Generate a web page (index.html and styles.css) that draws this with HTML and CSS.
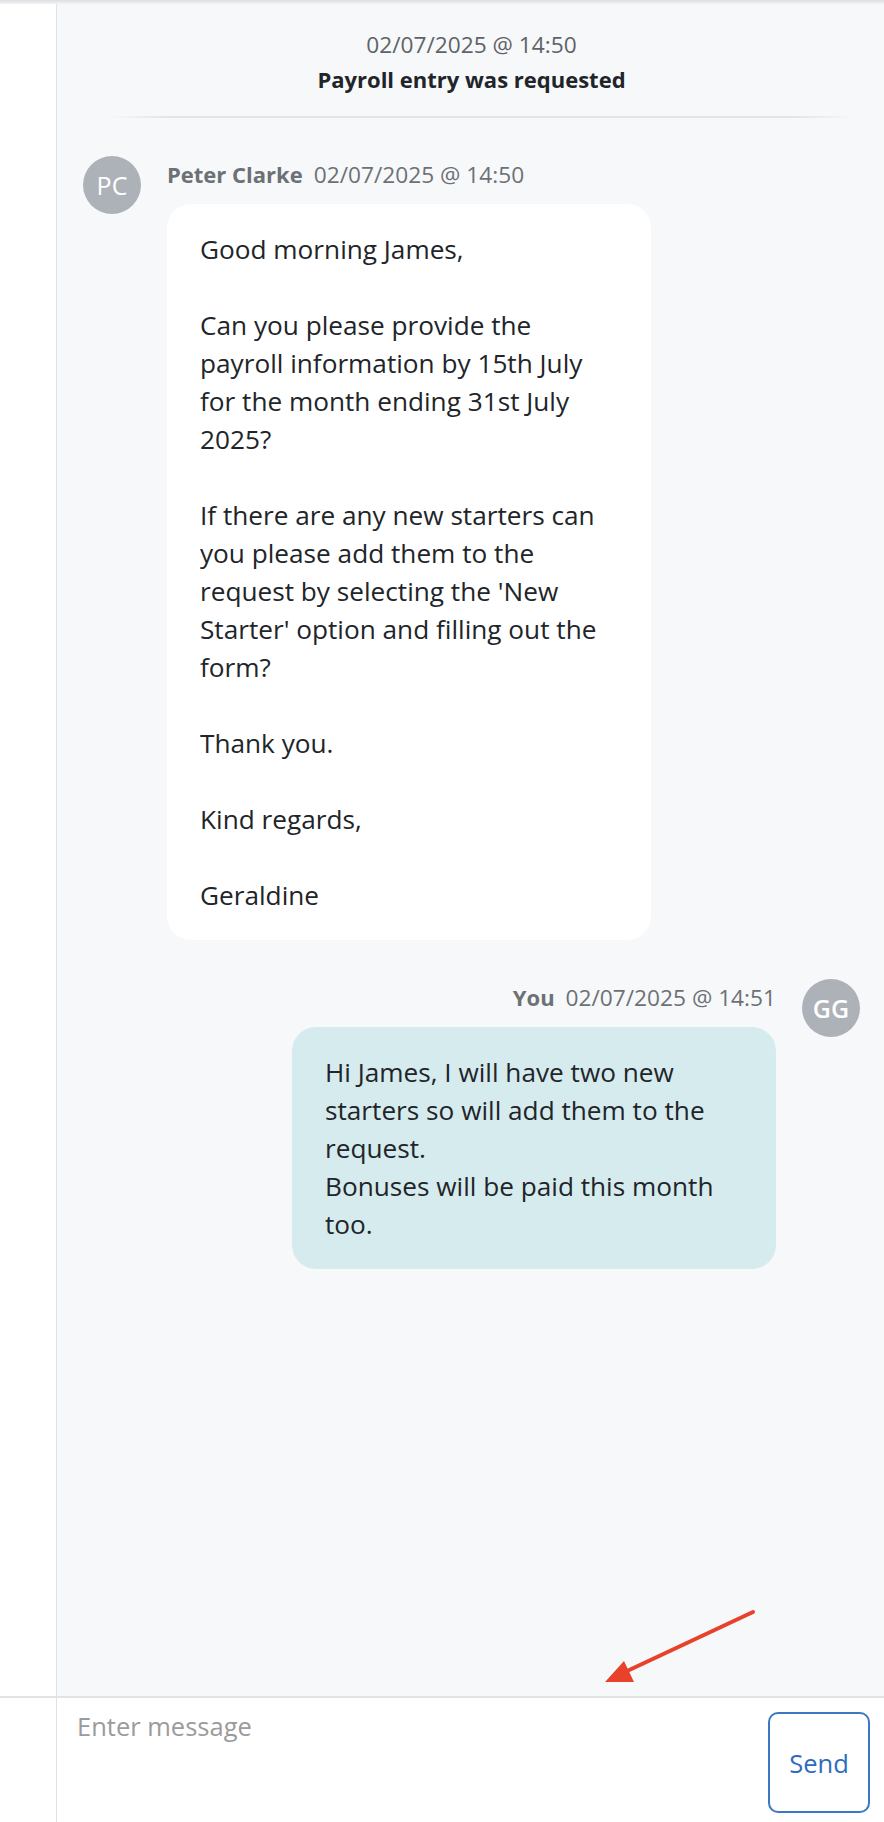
FILE: index.html
```html
<!DOCTYPE html>
<html lang="en">
<head>
<meta charset="utf-8">
<title>Payroll conversation</title>
<link rel="stylesheet" href="styles.css">
</head>
<body>
<div class="page">
  <div class="top-shade"></div>
  <div class="main">
    <aside class="rail"></aside>
    <section class="chat">
      <div class="event">
        <div class="event-date">02/07/2025 @ 14:50</div>
        <div class="event-title">Payroll entry was requested</div>
      </div>
      <div class="divider"></div>

      <div class="msg msg-in">
        <div class="avatar">PC</div>
        <div class="msg-body">
          <div class="meta"><span class="meta-name">Peter Clarke</span><span class="meta-date">02/07/2025 @ 14:50</span></div>
          <div class="bubble bubble-in">
            <p>Good morning James,</p>
            <p>Can you please provide the payroll information by 15th July for the month ending 31st July 2025?</p>
            <p>If there are any new starters can you please add them to the request by selecting the 'New Starter' option and filling out the form?</p>
            <p>Thank you.</p>
            <p>Kind regards,</p>
            <p>Geraldine</p>
          </div>
        </div>
      </div>

      <div class="msg msg-out">
        <div class="msg-body">
          <div class="meta"><span class="meta-name">You</span><span class="meta-date">02/07/2025 @ 14:51</span></div>
          <div class="bubble bubble-out">
            <p class="tight">Hi James, I will have two new starters so will add them to the request.</p>
            <p class="tight">Bonuses will be paid this month too.</p>
          </div>
        </div>
        <div class="avatar avatar-me">GG</div>
      </div>
    </section>
  </div>
  <div class="composer">
    <div class="rail"></div>
    <textarea class="input" placeholder="Enter message"></textarea>
    <button class="send" type="button">Send</button>
  </div>
  <svg class="annotation" width="170" height="95" viewBox="0 0 170 95" aria-hidden="true">
    <line x1="153" y1="7" x2="25" y2="67" stroke="#e8412c" stroke-width="4" stroke-linecap="round"/>
    <polygon points="5,77 24,56 34,77" fill="#e8412c"/>
  </svg>
</div>
</body>
</html>
```

FILE: styles.css
```css
* { box-sizing: border-box; }

html, body {
  margin: 0;
  padding: 0;
}

body {
  font-family: "Open Sans", "Noto Sans", "Liberation Sans", sans-serif;
  color: #212529;
  background: #ffffff;
}

.page {
  position: relative;
  width: 884px;
  height: 1822px;
  display: flex;
  flex-direction: column;
  overflow: hidden;
}

.top-shade {
  height: 4px;
  flex: 0 0 4px;
  background: linear-gradient(to bottom, #dcdee1, #f3f4f6);
}

.main {
  flex: 1 1 auto;
  display: flex;
  min-height: 0;
}

.rail {
  flex: 0 0 57px;
  width: 57px;
  background: #ffffff;
  border-right: 1px solid #dfe2e6;
}

.chat {
  flex: 1 1 auto;
  background: #f7f8fa;
  padding: 0 24px 0 26px;
  display: flex;
  flex-direction: column;
}

.event {
  padding-top: 24px;
  text-align: center;
  line-height: 34px;
}

.event-date {
  font-size: 22.7px;
  color: #5f6367;
}

.event-title {
  font-size: 22px;
  font-weight: 700;
  color: #212529;
}

.divider {
  height: 2px;
  margin: 20px 6px 38px 27px;
  background: linear-gradient(to right, rgba(226,228,231,0), #e2e4e7 8%, #e2e4e7 92%, rgba(226,228,231,0));
}

.msg {
  display: flex;
  align-items: flex-start;
  gap: 26px;
}

.msg-out {
  justify-content: flex-end;
  margin-top: 39px;
}

.avatar {
  flex: 0 0 58px;
  width: 58px;
  height: 58px;
  border-radius: 50%;
  background: #adb2b8;
  color: #ffffff;
  font-size: 25px;
  line-height: 58px;
  text-align: center;
}

.avatar-me {
  font-weight: 600;
}

.msg-body {
  display: flex;
  flex-direction: column;
  max-width: 484px;
}

.msg-out .msg-body {
  align-items: flex-end;
}

.meta {
  font-size: 22px;
  line-height: 36px;
  color: #6c7176;
  margin-bottom: 11px;
  white-space: nowrap;
}

.meta-name {
  font-weight: 700;
  margin-right: 11px;
}

.meta-date {
  font-size: 22.7px;
}

.bubble {
  width: 484px;
  padding: 26px 41px 26px 33px;
  border-radius: 24px;
  font-size: 26.2px;
  line-height: 38px;
  color: #212529;
}

.bubble-in {
  background: #ffffff;
}

.bubble-out {
  background: #d6ebee;
}

.bubble p {
  margin: 0 0 38px 0;
}

.bubble p:last-child,
.bubble p.tight {
  margin-bottom: 0;
}

.composer {
  flex: 0 0 126px;
  height: 126px;
  display: flex;
  align-items: flex-start;
  border-top: 2px solid #e2e3e6;
  background: #ffffff;
}

.composer .rail {
  align-self: stretch;
}

.input {
  flex: 1 1 auto;
  align-self: stretch;
  border: none;
  outline: none;
  resize: none;
  background: #ffffff;
  padding: 9px 20px;
  font-family: "Open Sans", "Noto Sans", "Liberation Sans", sans-serif;
  font-size: 25.5px;
  line-height: 38px;
  color: #212529;
}

.input::placeholder {
  color: #9b9b9b;
}

.send {
  flex: 0 0 102px;
  width: 102px;
  height: 101px;
  margin: 14px 14px 0 0;
  border: 2px solid #3b78c2;
  border-radius: 10px;
  background: #ffffff;
  color: #2d6cbd;
  font-family: "Open Sans", "Noto Sans", "Liberation Sans", sans-serif;
  font-size: 25.5px;
  padding: 0;
}

.annotation {
  position: absolute;
  left: 600px;
  top: 1605px;
}
```
